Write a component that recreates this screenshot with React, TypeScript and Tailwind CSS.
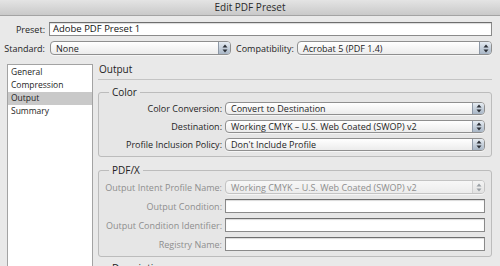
const font = "font-['Open_Sans',_'DejaVu_Sans',sans-serif]";

const Arrows = ({ dim }: { dim?: boolean }) => (
  <svg width="6" height="9" viewBox="0 0 6 9">
    <path d="M3 0.5 L5.5 3.5 L0.5 3.5 Z" fill={dim ? "#9aa0a6" : "#2b2f36"} />
    <path d="M3 8.5 L5.5 5.5 L0.5 5.5 Z" fill={dim ? "#9aa0a6" : "#2b2f36"} />
  </svg>
);

const Select = ({ value, className = "", disabled }: { value: string; className?: string; disabled?: boolean }) => (
  <div
    className={`flex items-stretch rounded-[4px] border ${
      disabled ? "border-[#c3c3c3] bg-linear-to-b from-[#f7f7f7] to-[#ececec] text-[#8d8d8d]" : "border-[#8f8f8f] bg-linear-to-b from-white to-[#ececec] text-[#1e1e1e]"
    } shadow-[0_1px_0_rgba(255,255,255,0.6)] ${className}`}
  >
    <div className="flex flex-1 items-center pl-[5px] leading-none whitespace-nowrap">{value}</div>
    <div
      className={`flex w-[12px] items-center justify-center rounded-r-[3px] border-l ${
        disabled ? "border-[#d0d0d0] bg-linear-to-b from-[#f4f4f4] to-[#e2e2e2]" : "border-[#8d98a6] bg-linear-to-b from-[#e6ecf2] to-[#a8b6c6]"
      }`}
    >
      <Arrows dim={disabled} />
    </div>
  </div>
);

const Field = ({ value = "", className = "" }: { value?: string; className?: string }) => (
  <div className={`flex items-center border border-[#8a8a8a] border-t-[#6e6e6e] bg-white pl-[3px] leading-none text-[#111] shadow-[inset_0_1px_1px_rgba(0,0,0,0.15)] ${className}`}>
    {value}
  </div>
);

const Row = ({ label, children, dim }: { label: string; children: React.ReactNode; dim?: boolean }) => (
  <div className="flex items-center">
    <div className={`w-[126px] shrink-0 pr-[3px] text-right leading-none whitespace-nowrap ${dim ? "text-[#8e8e8e]" : "text-[#1e1e1e]"}`}>
      {label}
    </div>
    <div className="flex-1">{children}</div>
  </div>
);

const Group = ({ title, children }: { title: string; children?: React.ReactNode }) => (
  <fieldset className="rounded-[3px] border border-[#bcbcbc] bg-[#e6e6e6] pr-[6px] pb-[5px]">
    <legend className="ml-[10px] px-[3px] text-[10px] leading-[12px] text-[#222]">{title}</legend>
    {children}
  </fieldset>
);

export default function App() {
  return (
    <div className={`${font} h-[266px] w-[500px] overflow-hidden bg-[#e9e9e9] text-[9px] text-[#1e1e1e]`}>
      <div className="flex h-[16px] items-center justify-center border-b border-[#a3a3a3] bg-linear-to-b from-[#e4e4e4] to-[#c9c9c9] text-[10px] text-[#2a2a2a]">
        Edit PDF Preset
      </div>

      <div className="mt-[6px] flex items-center">
        <div className="w-[47px] pr-[2px] text-right leading-none">Preset:</div>
        <Field value="Adobe PDF Preset 1" className="ml-[2px] h-[14px] w-[443px] text-[9.5px]" />
      </div>

      <div className="mt-[5px] flex items-center">
        <div className="w-[47px] pr-[2px] text-right leading-none">Standard:</div>
        <Select value="None" className="ml-[3px] h-[14px] w-[181px]" />
        <div className="ml-[5px] w-[60px] leading-none">Compatibility:</div>
        <Select value="Acrobat 5 (PDF 1.4)" className="ml-[1px] h-[14px] w-[195px]" />
      </div>

      <div className="mt-[9px] flex">
        <div className="ml-[7px] h-[220px] w-[86px] border border-[#a3a3a3] bg-white pt-[1px] text-[8.5px]">
          {["General", "Compression", "Output", "Summary"].map((s) => (
            <div key={s} className={`flex h-[13px] items-center pl-[3px] leading-none ${s === "Output" ? "bg-[#c9c9c9]" : ""}`}>
              {s}
            </div>
          ))}
        </div>

        <div className="ml-[5px] w-[394px]">
          <div className="h-[16px] border-b border-[#c4c4c4] pl-[1px] text-[10px] leading-[11px]">Output</div>

          <div className="mt-[6px]">
            <Group title="Color">
              <div className="flex flex-col gap-[5px] pt-[4px]">
                <Row label="Color Conversion:">
                  <Select value="Convert to Destination" className="h-[13px]" />
                </Row>
                <Row label="Destination:">
                  <Select value="Working CMYK – U.S. Web Coated (SWOP) v2" className="h-[13px]" />
                </Row>
                <Row label="Profile Inclusion Policy:">
                  <Select value="Don't Include Profile" className="h-[13px]" />
                </Row>
              </div>
            </Group>
          </div>

          <div className="mt-[7px]">
            <Group title="PDF/X">
              <div className="flex flex-col gap-[5px] pt-[4px]">
                <Row label="Output Intent Profile Name:" dim>
                  <Select value="Working CMYK – U.S. Web Coated (SWOP) v2" className="h-[14px]" disabled />
                </Row>
                <Row label="Output Condition:" dim>
                  <Field className="h-[14px]" />
                </Row>
                <Row label="Output Condition Identifier:" dim>
                  <Field className="h-[14px]" />
                </Row>
                <Row label="Registry Name:" dim>
                  <Field className="h-[14px]" />
                </Row>
              </div>
            </Group>
          </div>

          <div className="mt-[5px]">
            <Group title="Description">
              <div className="h-[40px]" />
            </Group>
          </div>
        </div>
      </div>
    </div>
  );
}
